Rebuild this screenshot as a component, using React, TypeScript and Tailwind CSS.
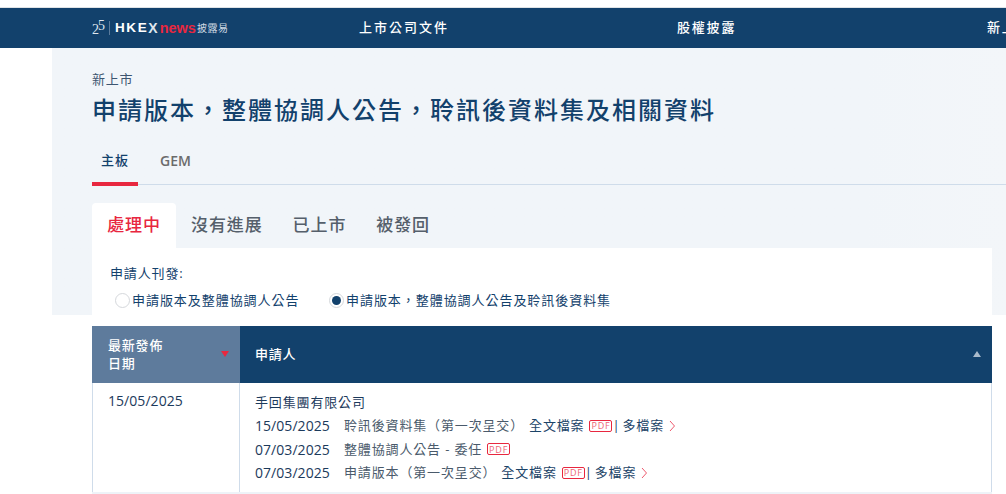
const FONT = "font-['Open_Sans','Noto_Sans_CJK_TC',sans-serif]";

function Pdf() {
  return (
    <span className="inline-flex h-[12px] w-[23px] items-center justify-center rounded-[2px] border border-[#e8273f] text-[9px] leading-none text-[#ee6475]">
      PDF
    </span>
  );
}

function Chevron() {
  return (
    <svg width="7" height="12" viewBox="0 0 7 12" className="ml-[5px] mt-[1px]" fill="none" stroke="#ee5a6e" strokeWidth="1">
      <path d="M1 1l4.5 5L1 11" />
    </svg>
  );
}

function DocRow({ date, title, full }: { date: string; title: string; full?: boolean }) {
  return (
    <div className="flex h-[23.5px] items-center whitespace-nowrap text-[13px] tracking-[0.85px] text-[#4a5a6b]">
      <span className="w-[89px] text-[14px] tracking-[0.05px] text-[#1c3a5c]">{date}</span>
      <span>{title}</span>
      {full && <span className="ml-[5px] text-[#1c4468]">全文檔案</span>}
      <span className="ml-[5px] flex items-center">
        <Pdf />
      </span>
      {full && (
        <>
          <span className="text-[#1c4468]">|</span>
          <span className="ml-[2px] text-[#1c4468]">多檔案</span>
          <Chevron />
        </>
      )}
    </div>
  );
}

export default function App() {
  return (
    <div lang="zh-Hant" className={`${FONT} h-[494px] w-[1006px] overflow-hidden bg-white`}>
      <div className="h-[8px] border-b border-[#dfe3e6] bg-white" />
      <nav className="flex h-10 items-center overflow-hidden whitespace-nowrap bg-[#12416c] pl-[92px] text-white">
        <div className="flex w-[267px] shrink-0 items-center">
          <span className="flex w-[13px] items-start pt-[3px] font-['Liberation_Serif',serif] text-[14px] leading-none text-[#dfe6ee]">
            2<span className="-ml-[1px] -mt-[4px]">5</span>
          </span>
          <span className="ml-[4px] h-[14px] w-px bg-[#5b7b9c]" />
          <span className="ml-[5px] font-['Liberation_Sans',sans-serif] text-[13.5px] font-bold tracking-[1.6px]">HKE</span>
          <span className="font-['Liberation_Sans',sans-serif] text-[14px] font-bold text-[#dfe6ee]">X</span>
          <span className="ml-[2px] font-['Liberation_Sans',sans-serif] text-[14.5px] font-bold leading-none text-[#e8273f]">news</span>
          <span className="ml-[1px] text-[10px] tracking-[0.5px] text-[#cfd9e3]">披露易</span>
        </div>
        <span className="w-[318px] shrink-0 text-[13px] font-medium tracking-[2px]">上市公司文件</span>
        <span className="w-[310px] shrink-0 text-[13px] font-medium tracking-[1.8px]">股權披露</span>
        <span className="text-[13px] font-medium tracking-[1.7px]">新上市</span>
      </nav>

      <section className="relative ml-[52px] h-[267px] bg-gradient-to-r from-[#f1f5f9] from-85% to-[#f3f6f9] pl-10">
        <div className="pt-[22px] pb-px text-[13px] leading-[18px] tracking-[0.7px] text-[#3d5570]">新上市</div>
        <h1 className="mt-[5px] whitespace-nowrap text-[24px] font-medium leading-[32px] tracking-[2px] text-[#12416c]">
          申請版本，整體協調人公告，聆訊後資料集及相關資料
        </h1>
        <div className="mt-[18px] flex h-[41px] border-b border-[#cfdcea]">
          <div className="h-[42px] w-[46px] border-b-[4px] border-[#e8273f] pt-[7px] text-center text-[13px] font-medium tracking-[1px] text-[#12416c]">
            主板
          </div>
          <div className="ml-[22px] pt-[6px] text-[14px] font-semibold text-[#6b6b6b]">GEM</div>
        </div>
        <div className="mt-[18px] flex h-[45px] items-stretch pb-0 text-[17px] font-medium tracking-[0.9px] text-[#555f6b]">
          <div className="flex w-[84px] items-center justify-center rounded-t-[4px] bg-white pb-[2px] text-[#e8273f]">處理中</div>
          <div className="ml-[15px] flex items-center pb-[2px]">沒有進展</div>
          <div className="ml-[30px] flex items-center pb-[2px]">已上市</div>
          <div className="ml-[30px] flex items-center pb-[2px]">被發回</div>
        </div>
        <div className="mr-[14px] h-[67px] bg-white pl-[18px] text-[13px] text-[#12416c]">
          <div className="pt-[16px] leading-[18px] tracking-[0.85px]">申請人刊發:</div>
          <div className="mt-[9px] flex items-center pl-[5px] leading-[18px] tracking-[0.95px]">
            <span className="h-[15px] w-[15px] rounded-full border border-[#d5d8dc] bg-white" />
            <span className="ml-[2px]">申請版本及整體協調人公告</span>
            <span className="ml-[29.6px] flex h-[15px] w-[15px] items-center justify-center rounded-full border border-[#d5d8dc] bg-white">
              <span className="h-[9px] w-[9px] rounded-full bg-[#12416c]" />
            </span>
            <span className="ml-[2px]">申請版本，整體協調人公告及聆訊後資料集</span>
          </div>
        </div>
      </section>

      <div className="ml-[92px] mt-[11px] w-[900px]">
        <div className="flex h-[57px] text-[13px] font-medium leading-[18px] tracking-[0.8px] text-white">
          <div className="relative flex w-[148px] items-center bg-[#5e7b9c] pb-[2px] pl-4">
            <span>
              最新發佈
              <br />
              日期
            </span>
            <span className="absolute left-[129px] top-[25px] h-0 w-0 border-x-[4px] border-t-[6px] border-x-transparent border-t-[#e8273f]" />
          </div>
          <div className="relative flex flex-1 items-center bg-[#12416c] pb-[2px] pl-[15px]">
            <span>申請人</span>
            <span className="absolute right-[11px] top-[25px] h-0 w-0 border-x-[4px] border-b-[6px] border-x-transparent border-b-[#a9bacb]" />
          </div>
        </div>
        <div className="flex h-[111px] border-b-[2px] border-[#eef3f8]">
          <div className="w-[148px] border-x border-[#cfdcea] pl-[15px] pt-[9px] text-[14px] leading-[18px] tracking-[0.05px] text-[#1c3a5c]">
            15/05/2025
          </div>
          <div className="flex-1 border-r border-[#cfdcea] pl-[15px] pt-[9px]">
            <div className="mb-[2px] h-[20px] text-[13px] leading-[20px] tracking-[0.85px] text-[#1c3a5c]">手回集團有限公司</div>
            <DocRow date="15/05/2025" title="聆訊後資料集（第一次呈交）" full />
            <DocRow date="07/03/2025" title="整體協調人公告 - 委任" />
            <DocRow date="07/03/2025" title="申請版本（第一次呈交）" full />
          </div>
        </div>
      </div>
    </div>
  );
}
